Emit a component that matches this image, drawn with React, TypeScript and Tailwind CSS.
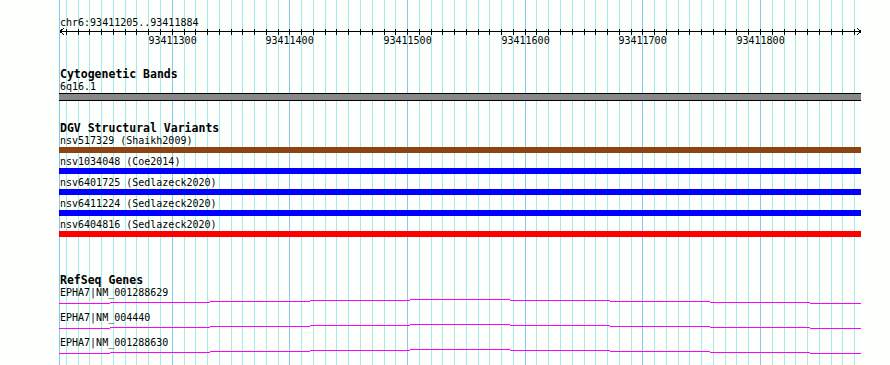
import React from "react";

const START = 93411205;
const SCALE = 800 / 680;
const toX = (bp: number) => Math.round(60 + (bp - START) * SCALE);

const gridBps = Array.from({ length: 68 }, (_, i) => 93411210 + i * 10);
const majorBps = [93411300, 93411400, 93411500, 93411600, 93411700, 93411800];

const variants = [
  { label: "nsv517329 (Shaikh2009)", color: "bg-[#8b4513]" },
  { label: "nsv1034048 (Coe2014)", color: "bg-[#0000ff]" },
  { label: "nsv6401725 (Sedlazeck2020)", color: "bg-[#0000ff]" },
  { label: "nsv6411224 (Sedlazeck2020)", color: "bg-[#0000ff]" },
  { label: "nsv6404816 (Sedlazeck2020)", color: "bg-[#ff0000]" },
];

const genes = ["EPHA7|NM_001288629", "EPHA7|NM_004440", "EPHA7|NM_001288630"];

// x breaks of the transcript line and the y offset of each piece
const breaks = [59, 110, 210, 310, 410, 510, 610, 710, 810, 861];
const offsets = [4, 3, 2, 1, 0, 1, 2, 3, 4];

const Grid = () => (
  <svg
    className="absolute inset-0 pointer-events-none"
    width={890}
    height={365}
    shapeRendering="crispEdges"
  >
    <rect x={59} y={0} width={1} height={365} fill="#88c8ee" />
    {gridBps.map((bp) => (
      <rect
        key={bp}
        x={toX(bp)}
        y={0}
        width={1}
        height={365}
        fill={bp % 100 === 0 ? "#88c8ee" : "#a8eaea"}
      />
    ))}
  </svg>
);

const Axis = () => (
  <svg
    className="block overflow-visible"
    width={802}
    height={6}
    shapeRendering="crispEdges"
  >
    <rect x={1} y={2} width={801} height={1} fill="#000" />
    {gridBps.map((bp) => (
      <rect key={bp} x={toX(bp) - 59} y={0} width={1} height={6} fill="#000" />
    ))}
    <path d="M1 2.5 L5 -1 M1 2.5 L5 6" stroke="#000" strokeWidth={1} fill="none" />
    <path d="M802 2.5 L798 -1 M802 2.5 L798 6" stroke="#000" strokeWidth={1} fill="none" />
  </svg>
);

const Transcript = () => (
  <svg className="block" width={802} height={13} shapeRendering="crispEdges">
    {offsets.map((dy, i) => (
      <rect
        key={i}
        x={breaks[i] - 59}
        y={dy}
        width={breaks[i + 1] - breaks[i]}
        height={1}
        fill="#ff00ff"
      />
    ))}
  </svg>
);

export default function App() {
  return (
    <div className="relative w-[890px] h-[365px] overflow-hidden bg-[#fcfffc] text-black font-['DejaVu_Sans_Mono',monospace]">
      <Grid />
      <div className="relative ml-[59px] w-[802px] pt-[16px] flex flex-col">
        <div className="pl-px h-[13px] text-[10px] leading-[13px]">chr6:93411205..93411884</div>
        <Axis />
        <div className="relative h-[12px] text-[10px] leading-[12px]">
          {majorBps.map((bp) => (
            <span
              key={bp}
              className="absolute top-0 w-[48px] text-center"
              style={{ left: toX(bp) - 59 - 24 + 0.5 }}
            >
              {bp}
            </span>
          ))}
        </div>

        <div className="mt-[21px] pl-px h-[13px] text-[11.5px] leading-[13px] font-bold">
          Cytogenetic Bands
        </div>
        <div className="pl-px h-[12px] text-[10px] leading-[12px]">6q16.1</div>
        <div className="h-[8px] bg-[#888888] border-y border-black" />

        <div className="mt-[21px] pl-px h-[13px] text-[11.5px] leading-[13px] font-bold">
          DGV Structural Variants
        </div>
        <div className="flex flex-col gap-[3px]">
          {variants.map((v) => (
            <div key={v.label} className="flex flex-col">
              <div className="pl-px h-[12px] text-[10px] leading-[12px]">{v.label}</div>
              <div className={`h-[6px] ${v.color}`} />
            </div>
          ))}
        </div>

        <div className="mt-[37px] pl-px h-[13px] text-[11.5px] leading-[13px] font-bold">
          RefSeq Genes
        </div>
        {genes.map((g) => (
          <div key={g} className="flex flex-col">
            <div className="pl-px h-[12px] text-[10px] leading-[12px]">{g}</div>
            <Transcript />
          </div>
        ))}
      </div>
    </div>
  );
}
